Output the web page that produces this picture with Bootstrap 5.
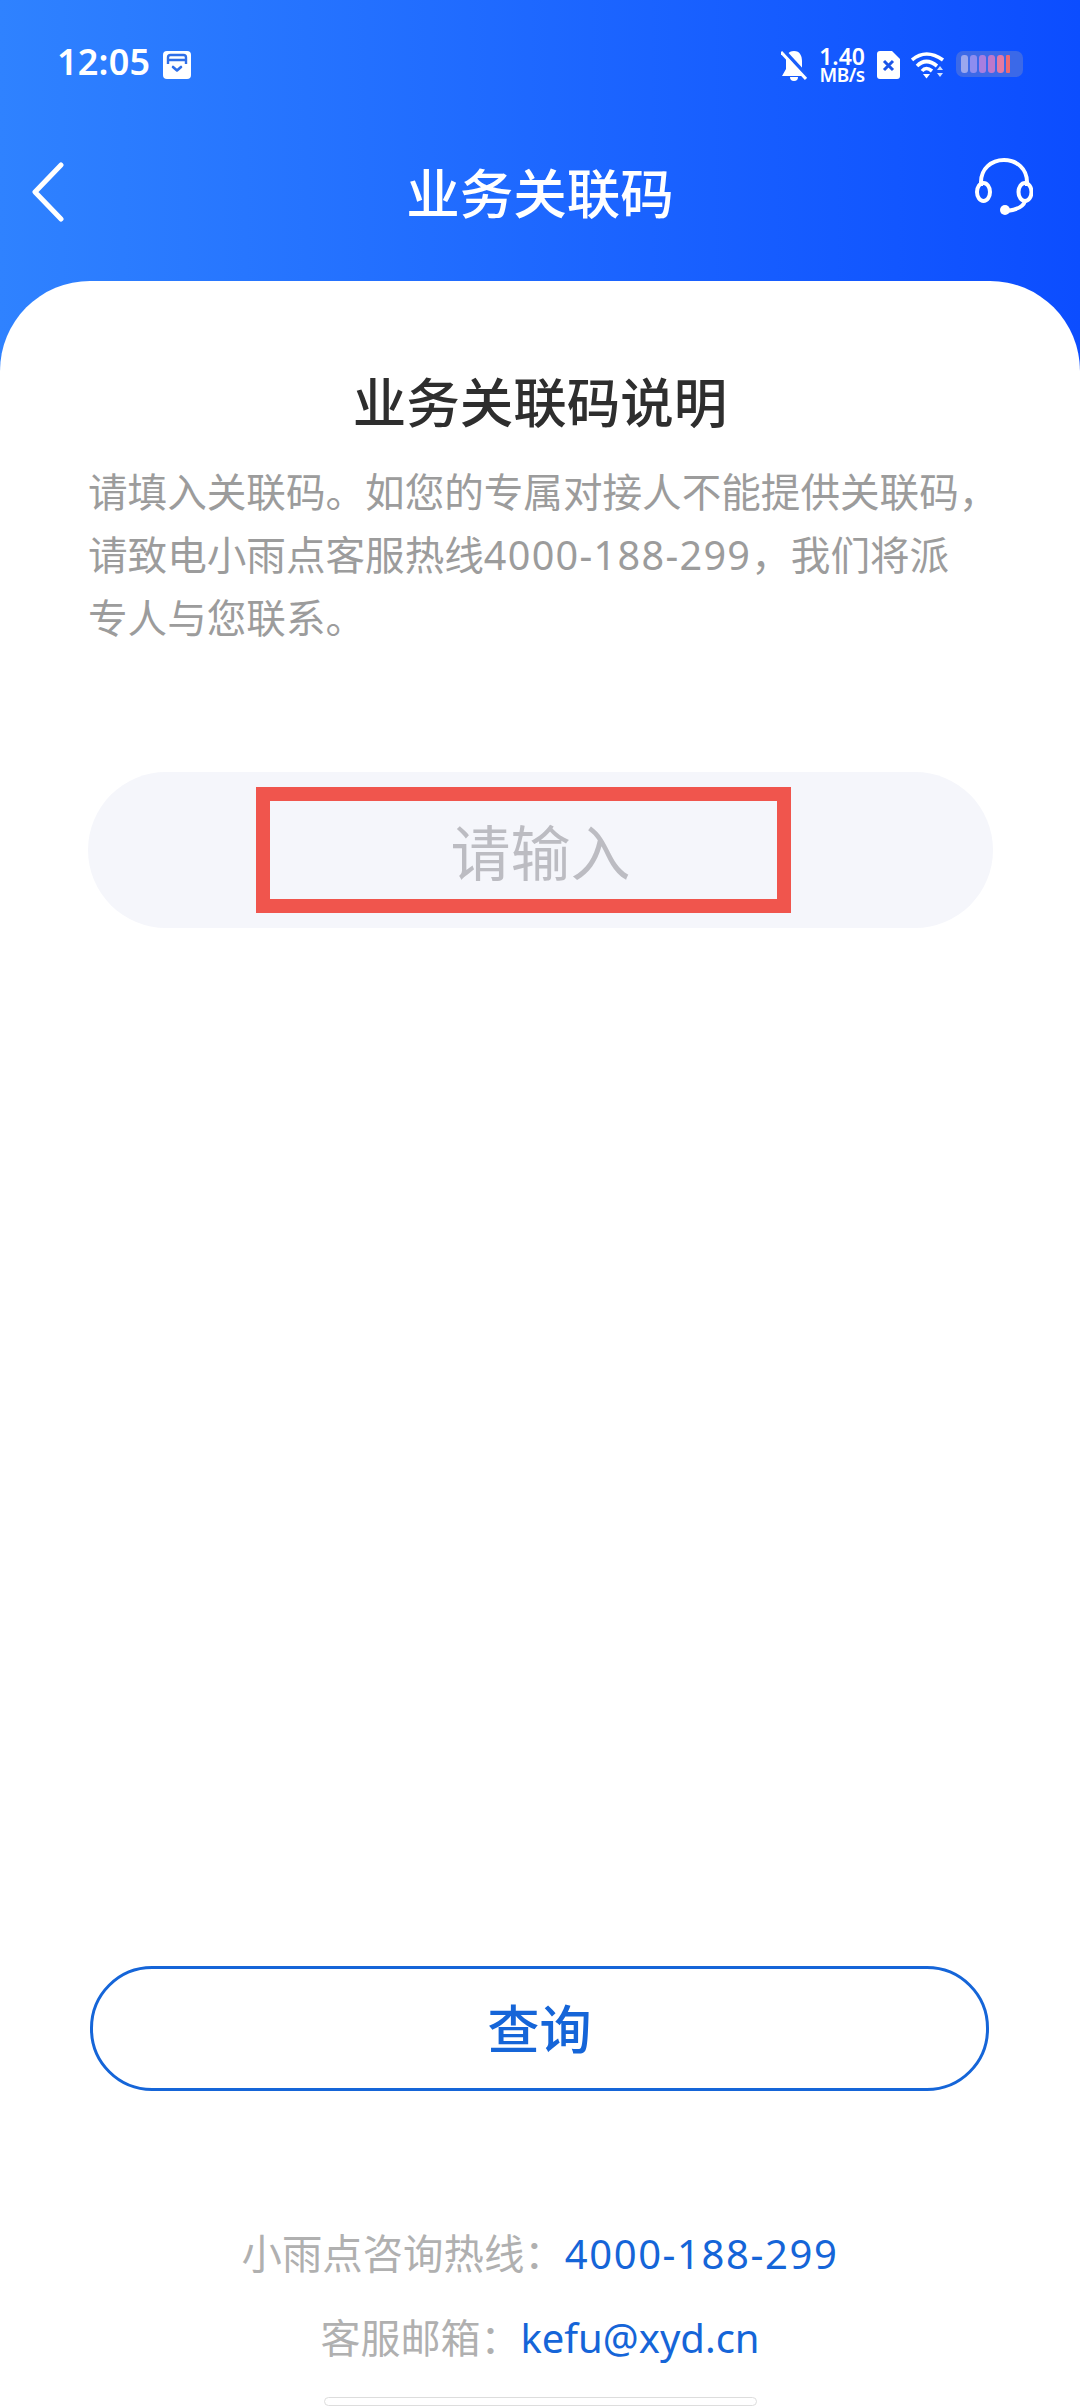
<!DOCTYPE html>
<html lang="zh-CN">
<head>
<meta charset="utf-8">
<title>业务关联码</title>
<link rel="stylesheet" href="https://cdn.jsdelivr.net/npm/bootstrap@5.3.0/dist/css/bootstrap.min.css">
<style>
html,body{height:2408px;overflow:hidden}
body{font-family:"Noto Sans","Noto Sans CJK SC",sans-serif;background:#fff}
.screen{height:2408px;background:linear-gradient(90deg,#2f82ff 0%,#0c4dff 100%)}
.status-row{height:128px;padding:47px 57px 0 57px;color:#fff}
.clock{font-size:36px;font-weight:600;line-height:30px;letter-spacing:.2px;margin-right:13px}
.speed{font-weight:600;margin:-1px 12px 0;text-align:center}
.speed-big{font-size:23px;line-height:21px;display:block}
.speed-small{font-size:19px;line-height:17px;letter-spacing:-.5px;display:block}
.status-icons{gap:11px}
.top-bar{height:153px;padding:0 47px 26px 32px;color:#fff}
.bar-left{width:115px}
.bar-right{width:100px}
.headset{margin-bottom:10px}
.top-title{font-size:53.5px;font-weight:500;line-height:70px;margin-top:5px}
.sheet{border-radius:90px 90px 0 0;background:#fff;padding:87px 88px 2px}
.sheet-title{font-size:53.5px;font-weight:500;line-height:70px;color:#2e2e2e;margin:0 0 23px}
.sheet-text{font-size:39.6px;line-height:63px;color:#9c9c9c;white-space:nowrap;margin:0}
.digits{letter-spacing:1.3px}
.code-field{height:156px;margin-top:122px;margin-right:-1px;border-radius:78px;background:#f5f6fb}
.code-mark{width:535px;height:126px;margin-right:34px;padding:6px 0 0 34px;border:14px solid #f0554d;color:#bcbcc2;font-size:60px}
.query-btn{--bs-btn-color:#1565d8;--bs-btn-border-color:#1565d8;--bs-btn-hover-bg:#fff;--bs-btn-hover-color:#1565d8;--bs-btn-hover-border-color:#1565d8;height:125px;margin-top:auto;font-size:52px;font-weight:500;border-width:3px;border-radius:62px;line-height:1;margin-left:2px;margin-right:3px}
.contact-line{font-size:40px;line-height:56px;color:#b0b0b0;white-space:nowrap}
.contact-line a{color:#1565d8;text-decoration:none}
.contact-a{margin-top:135px;font-size:40.4px}
.contact-a .digits{font-size:40px;letter-spacing:1.6px}
.contact-b{margin-top:28px}
.home-bar{width:433px;height:9px;margin-top:31px;background:#fff;border:1px solid #ddd;border-radius:5px}
</style>
</head>
<body>
<div class="screen d-flex flex-column">
  <div class="status-row d-flex align-items-start flex-shrink-0">
    <span class="clock">12:05</span>
    <svg width="28" height="28" viewBox="0 0 28 28" class="mt-1"><rect width="28" height="28" rx="4" fill="#fff"/><path d="M5 13V6.500Q5 4 7.500 4H20.500Q23 4 23 6.500V13M5 9H23" fill="none" stroke="#2f6fe8" stroke-width="2.400"/><path d="M10 16l4 3.500 4-3.500" fill="none" stroke="#2f6fe8" stroke-width="2.600" stroke-linecap="round" stroke-linejoin="round"/></svg>
    <div class="ms-auto d-flex align-items-start">
      <svg width="26" height="30" viewBox="0 0 26 30" class="mt-1"><path d="M13 0C7 0 5 5 5 10V18L1 25H25L21 18V10C21 5 19 0 13 0Z" fill="#fff"/><path d="M9 26a4 4 0 0 0 8 0Z" fill="#fff"/><path d="M3 0L28 27" stroke="#1a5ffb" stroke-width="4"/><path d="M0 1L25 28" stroke="#fff" stroke-width="3"/></svg>
      <span class="speed"><span class="speed-big">1.40</span><span class="speed-small">MB/s</span></span>
      <div class="d-flex status-icons">
        <svg width="23" height="28" viewBox="0 0 23 28" class="mt-1"><path d="M3 0H15L23 8V25Q23 28 20 28H3Q0 28 0 25V3Q0 0 3 0Z" fill="#fff"/><path d="M7 10l9 9M16 10l-9 9" stroke="#1b55e8" stroke-width="3"/></svg>
        <svg width="34" height="28" viewBox="0 0 34 28" class="mt-1"><g fill="none" stroke="#fff" stroke-width="3.600"><path d="M1 9Q15-3 32 9"/><path d="M6 15Q15 6 26 15"/><path d="M11 20Q15 15 21 20"/></g><path d="M12 23H19L15.500 27.500Z" fill="#fff"/><path d="M26 19l3-4 3 4ZM26 22h6l-3 4Z" fill="#cfe0ff"/></svg>
        <svg width="67" height="26" viewBox="0 0 67 26" class="mt-1"><rect width="67" height="26" rx="7" fill="#5a79d8" fill-opacity=".6"/><rect x="5" y="4" width="7" height="18" rx="3" fill="#9aa7ee"/><rect x="14" y="4" width="7" height="18" rx="3" fill="#8d8df0"/><rect x="23" y="4" width="7" height="18" rx="3" fill="#a77ee0"/><rect x="32" y="4" width="7" height="18" rx="3" fill="#bd78cc"/><rect x="41" y="4" width="7" height="18" rx="3" fill="#e27aa4"/><rect x="50" y="4" width="4" height="18" rx="1" fill="#ee6a70"/></svg>
      </div>
    </div>
  </div>
  <div class="top-bar d-flex align-items-center flex-shrink-0">
    <div class="bar-left d-flex"><svg width="32" height="60" viewBox="0 0 32 60"><path d="M29 3L3 30L29 57" fill="none" stroke="#fff" stroke-width="5" stroke-linecap="round" stroke-linejoin="round"/></svg></div>
    <span class="top-title flex-grow-1 text-center">业务关联码</span>
    <div class="bar-right d-flex justify-content-end"><svg class="headset" width="58" height="58" viewBox="0 0 58 58"><g fill="none" stroke="#fff" stroke-width="4"><path d="M6 28V24C6 11 16 2 29 2S52 11 52 24V28"/><ellipse cx="8.500" cy="34" rx="6.500" ry="9"/><ellipse cx="50" cy="34" rx="6.500" ry="9"/><path d="M50 43C48 50 40 52 32 53"/></g><circle cx="30" cy="52" r="5" fill="#fff"/></svg></div>
  </div>
  <main class="sheet flex-grow-1 d-flex flex-column">
    <h1 class="sheet-title text-center">业务关联码说明</h1>
    <p class="sheet-text">请填入关联码。如您的专属对接人不能提供关联码，<br>请致电小雨点客服热线<span class="digits">4000-188-299</span>，我们将派<br>专人与您联系。</p>
    <div class="code-field d-flex align-items-center justify-content-center">
      <div class="code-mark d-flex align-items-center justify-content-center">请输入</div>
    </div>
    <button type="button" class="btn btn-outline-primary query-btn flex-shrink-0">查询</button>
    <div class="contact-line contact-a text-center">小雨点咨询热线：<a class="digits" href="#">4000-188-299</a></div>
    <div class="contact-line contact-b text-center">客服邮箱：<a href="#">kefu@xyd.cn</a></div>
    <div class="home-bar mx-auto flex-shrink-0"></div>
  </main>
</div>
</body>
</html>
